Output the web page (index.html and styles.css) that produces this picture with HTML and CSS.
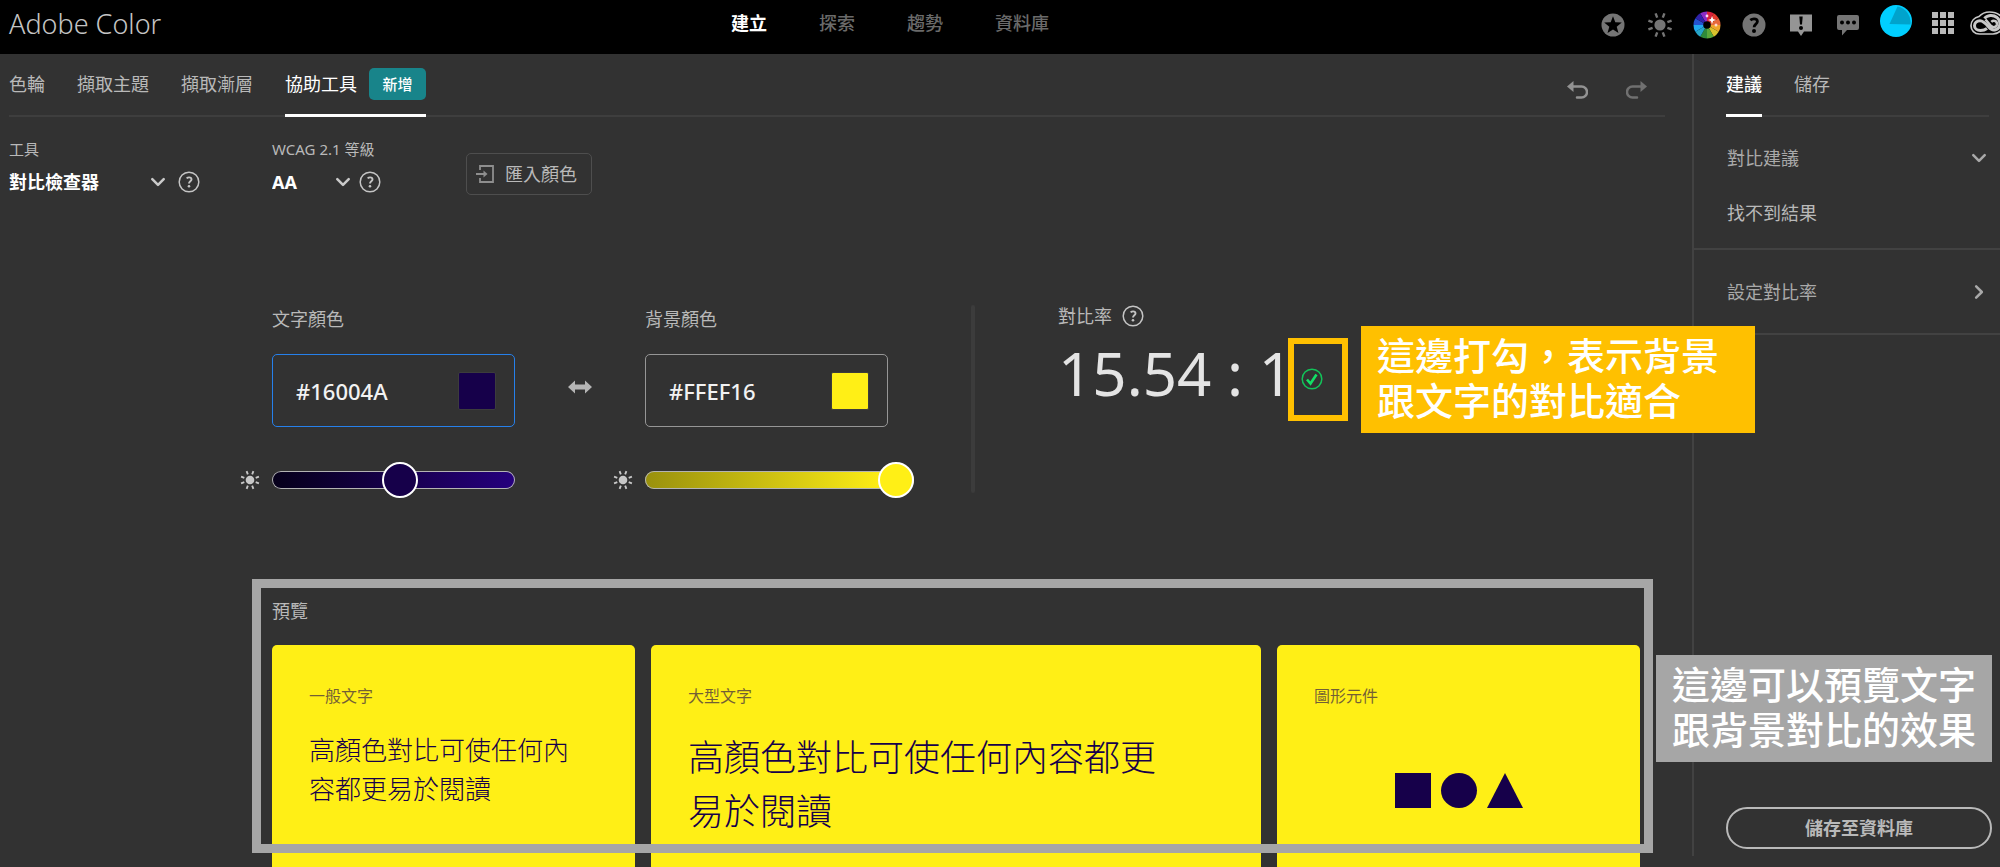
FILE: index.html
```html
<!DOCTYPE html>
<html lang="zh-Hant">
<head>
<meta charset="utf-8">
<meta name="viewport" content="width=device-width, initial-scale=1">
<title>Adobe Color</title>
<link rel="stylesheet" href="styles.css">
</head>
<body>
<svg class="defs" aria-hidden="true">
  <symbol id="sun" viewBox="0 0 26 26">
    <circle cx="13" cy="13" r="5.6" fill="currentColor"/>
    <g stroke="currentColor" stroke-width="2.4">
      <path d="M10.2 5.6 8.6 1.4M15.8 5.6l1.6-4.2M20.4 10.2l4.2-1.6M20.4 15.8l4.2 1.6M15.8 20.4l1.6 4.2M10.2 20.4l-1.6 4.2M5.6 15.8l-4.2 1.6M5.6 10.2 1.4 8.6"/>
    </g>
  </symbol>
  <symbol id="help" viewBox="0 0 22 22">
    <circle cx="11" cy="11" r="9.8" fill="none" stroke="currentColor" stroke-width="1.5"/>
    <path d="M8.6 7.4c.8-.7 1.6-1 2.5-1 1.4 0 2.4.8 2.4 2 0 1.9-2.5 2-2.5 4.2" fill="none" stroke="currentColor" stroke-width="1.9"/>
    <circle cx="11" cy="15.3" r="1.3" fill="currentColor"/>
  </symbol>
  <symbol id="chevron" viewBox="0 0 14 14">
    <path d="M2 4.500 7 9.500l5-5" fill="none" stroke="currentColor" stroke-width="2.2" stroke-linecap="round" stroke-linejoin="round"/>
  </symbol>
  <symbol id="undo" viewBox="0 0 21 18">
    <path d="M5 5.500h9.500a5 5 0 0 1 0 11H10" fill="none" stroke="currentColor" stroke-width="2.5" stroke-linecap="round"/>
    <path d="M0 5.500 6.500 0v11z" fill="currentColor"/>
  </symbol>
</svg>

<header class="topbar">
  <h1 class="brand">Adobe Color</h1>
  <nav class="mainnav">
    <a class="active" href="#create">建立</a>
    <a href="#explore">探索</a>
    <a href="#trends">趨勢</a>
    <a href="#libraries">資料庫</a>
  </nav>
  <div class="actions">
    <button class="icon" aria-label="星號"><svg width="24" height="24" viewBox="0 0 24 24"><circle cx="12" cy="12" r="11.5" fill="#757575"/><path d="m12 3.200 2.300 6.100 6.500.3-5.100 4.100 1.800 6.300-5.500-3.600L6.500 20l1.800-6.300-5.100-4.100 6.500-.3z" fill="#000"/></svg></button>
    <button class="icon" aria-label="主題"><svg width="26" height="26"><use href="#sun"/></svg></button>
    <button class="icon" aria-label="色輪"><svg width="28" height="28" viewBox="0 0 28 28">
      <g transform="translate(14 14)">
        <path fill="#8a2bc4" d="M0 0-6.800-11.700A13.500 13.500 0 0 1 0-13.500z"/>
        <path fill="#d8203c" d="M0 0V-13.500A13.500 13.500 0 0 1 6.800-11.700z"/>
        <path fill="#e23a2e" d="M0 0 6.800-11.700A13.500 13.500 0 0 1 11.700-6.800z"/>
        <path fill="#e8683a" d="M0 0 11.700-6.800A13.500 13.500 0 0 1 13.500 0z"/>
        <path fill="#efa52a" d="M0 0H13.500A13.500 13.500 0 0 1 11.700 6.800z"/>
        <path fill="#d9c22d" d="M0 0 11.700 6.800A13.500 13.500 0 0 1 6.800 11.700z"/>
        <path fill="#5aa83a" d="M0 0 6.800 11.700A13.500 13.500 0 0 1 0 13.500z"/>
        <path fill="#2f8a3a" d="M0 0V13.500A13.500 13.500 0 0 1-6.800 11.700z"/>
        <path fill="#27a6c8" d="M0 0-6.800 11.700A13.500 13.500 0 0 1-11.700 6.800z"/>
        <path fill="#20a8ee" d="M0 0-11.700 6.800A13.500 13.500 0 0 1-13.500 0z"/>
        <path fill="#2452cf" d="M0 0H-13.500A13.500 13.500 0 0 1-11.700-6.800z"/>
        <path fill="#2f22a8" d="M0 0-11.700-6.800A13.500 13.500 0 0 1-6.800-11.700z"/>
        <circle r="3.8" fill="#000"/>
        <path fill="#fff" d="m5-9 1.100 2.900L9-5 6.100-3.900 5-1 3.900-3.900 1-5l2.900-1.100z"/>
        <circle cx="0" cy="-9" r="1.4" fill="#ffd9ee"/><circle cx="9" cy="0" r="1.5" fill="#ffd9c9"/>
      </g></svg></button>
    <button class="icon" aria-label="說明"><svg width="24" height="24" viewBox="0 0 24 24"><circle cx="12" cy="12" r="11.5" fill="#757575"/><path d="M8.300 7.200C9.500 6.200 10.700 5.800 12 5.800c2.100 0 3.400 1.100 3.400 2.700 0 2.600-3.300 2.700-3.300 5.700" fill="none" stroke="#000" stroke-width="2.8"/><circle cx="12" cy="18" r="2" fill="#000"/></svg></button>
    <button class="icon" aria-label="公告"><svg width="22" height="24" viewBox="0 0 22 24"><path d="M0 1.500h22v17h-8L11 23l-3-4.500H0z" fill="#959595"/><path d="M9.300 3.500h3.400l-.7 8h-2z" fill="#000"/><circle cx="11" cy="15" r="2" fill="#000"/></svg></button>
    <button class="icon" aria-label="意見"><svg width="22" height="24" viewBox="0 0 22 24"><path d="M2 2h18a2 2 0 0 1 2 2v11a2 2 0 0 1-2 2H10l-5 5.500V17H2a2 2 0 0 1-2-2V4a2 2 0 0 1 2-2z" fill="#757575"/><g fill="#000"><circle cx="5" cy="9.500" r="2"/><circle cx="11" cy="9.500" r="2"/><circle cx="17" cy="9.500" r="2"/></g></svg></button>
    <button class="icon avatar" aria-label="個人檔案"><svg width="32" height="32" viewBox="0 0 32 32"><circle cx="16" cy="16" r="16" fill="#00cfff"/><path d="M17.500 1.500A16 16 0 0 1 30.500 19.500L9.500 19z" fill="#00a3cc"/></svg></button>
    <button class="icon apps" aria-label="應用程式"><svg width="22" height="22" viewBox="0 0 22 22" fill="#b9b9b9"><path d="M0 0h6v6H0zM8 0h6v6H8zM16 0h6v6h-6zM0 8h6v6H0zM8 8h6v6H8zM16 8h6v6h-6zM0 16h6v6H0zM8 16h6v6H8zM16 16h6v6h-6z"/></svg></button>
    <button class="icon cloud" aria-label="Creative Cloud"><svg width="36" height="24" viewBox="0 0 36 24"><g fill="none" stroke="#c8c8c8"><path stroke-width="1.7" d="M9 5.500C12 2.200 15 1 19.500 1 28 1 34 6 34 12s-5 11-11 11H9.500C4.500 23 1 19.300 1 14.800 1 10 4.500 6.500 9 5.500z"/><path stroke-width="3" d="M17 17.500c-2 1.500-4 2-6.500 2-3.500 0-6-2-6-4.800 0-3 2.500-5 5.500-5s5 1.800 8.500 6.100c2 2.400 4.500 3.700 7 3 5-1.300 6-8.300 1.500-12.300-4-3.300-10-2.500-12.500 1"/><path stroke-width="2.6" d="m15.500 8.500 5.500 6.500c2 2 5.500 1.500 6-1.500.4-3-3-5-5.700-2.600"/></g></svg></button>
  </div>
</header>

<div class="app">
  <main class="workspace">
    <div class="tabbar">
      <nav class="tabs">
        <a href="#wheel">色輪</a>
        <a href="#extract-theme">擷取主題</a>
        <a href="#extract-gradient">擷取漸層</a>
        <a class="active" href="#accessibility">協助工具<span class="badge">新增</span></a>
      </nav>
      <div class="history">
        <button class="icon" aria-label="復原"><svg width="21" height="18"><use href="#undo"/></svg></button>
        <button class="icon redo" aria-label="重做"><svg width="21" height="18"><use href="#undo"/></svg></button>
      </div>
    </div>

    <div class="tools">
      <div class="tool tool-type">
        <label for="tool">工具</label>
        <div class="control">
          <div class="picker">
            <select id="tool"><option>對比檢查器</option></select>
            <svg class="chev" width="16" height="16"><use href="#chevron"/></svg>
          </div>
          <button class="icon" aria-label="工具說明"><svg width="22" height="22"><use href="#help"/></svg></button>
        </div>
      </div>
      <div class="tool tool-level">
        <label for="level">WCAG 2.1 等級</label>
        <div class="control">
          <div class="picker">
            <select id="level"><option>AA</option></select>
            <svg class="chev" width="16" height="16"><use href="#chevron"/></svg>
          </div>
          <button class="icon" aria-label="等級說明"><svg width="22" height="22"><use href="#help"/></svg></button>
        </div>
      </div>
      <button class="import">
        <svg width="18" height="18" viewBox="0 0 18 18" fill="none" stroke="#8e8e8e" stroke-width="1.8"><path d="M4 5V1h13v16H4v-4M0 9h9"/><path d="m7.500 5.500 4 3.500-4 3.500z" fill="#8e8e8e" stroke="none"/></svg>
        匯入顏色
      </button>
    </div>

    <section class="checker">
      <div class="color">
        <label class="color-label" for="fg">文字顏色</label>
        <div class="field focused">
          <input id="fg" type="text" value="#16004A">
          <button class="swatch swatch-fg" aria-label="選取文字顏色"></button>
        </div>
        <svg class="sun" width="20" height="20"><use href="#sun"/></svg>
        <input class="slider slider-fg" type="range" min="0" max="100" value="53" aria-label="文字顏色亮度">
      </div>
      <button class="icon swap" aria-label="交換顏色"><svg width="24" height="14" viewBox="0 0 24 14"><path d="M0 7l7-6.500V4.500h10V.5L24 7l-7 6.500V9.500H7v4z" fill="#b5b5b5"/></svg></button>
      <div class="color">
        <label class="color-label" for="bg">背景顏色</label>
        <div class="field">
          <input id="bg" type="text" value="#FFEF16">
          <button class="swatch swatch-bg" aria-label="選取背景顏色"></button>
        </div>
        <svg class="sun" width="20" height="20"><use href="#sun"/></svg>
        <input class="slider slider-bg" type="range" min="0" max="100" value="100" aria-label="背景顏色亮度">
      </div>
      <div class="divider"></div>
      <div class="ratio">
        <div class="ratio-label">對比率
          <button class="icon" aria-label="對比率說明"><svg width="22" height="22"><use href="#help"/></svg></button>
        </div>
        <div class="ratio-value">
          <output>15.54 : 1</output>
          <div class="result">
            <svg width="22" height="22" viewBox="0 0 22 22" fill="none" stroke="#12c259"><circle cx="11" cy="11" r="9.8" stroke-width="1.5"/><path d="m6 11.500 3.500 4L15.500 6.500" stroke="#12e066" stroke-width="2.6"/></svg>
            <div class="result-frame"></div>
            <p class="note note-result">這邊打勾，表示背景<br>跟文字的對比適合</p>
          </div>
        </div>
      </div>
    </section>

    <section class="preview">
      <h2 class="preview-title">預覽</h2>
      <div class="cards">
        <article class="card">
          <h3>一般文字</h3>
          <p class="sample-normal">高顏色對比可使任何內容都更易於閱讀</p>
        </article>
        <article class="card">
          <h3>大型文字</h3>
          <p class="sample-large">高顏色對比可使任何內容都更易於閱讀</p>
        </article>
        <article class="card">
          <h3>圖形元件</h3>
          <svg class="shapes" width="128" height="35" viewBox="0 0 128 35" fill="#16004a"><path d="M0 0h36v35H0z"/><ellipse cx="64" cy="17.5" rx="18" ry="17.5"/><path d="m110 0 18 35H92z"/></svg>
        </article>
      </div>
      <div class="preview-frame"></div>
      <p class="note note-preview">這邊可以預覽文字<br>跟背景對比的效果</p>
    </section>
  </main>

  <aside class="sidebar">
    <nav class="tabs side-tabs">
      <a class="active strong" href="#suggest">建議</a>
      <a href="#save">儲存</a>
    </nav>
    <section class="panel">
      <button class="panel-head">對比建議<svg width="16" height="16"><use href="#chevron"/></svg></button>
      <p class="empty">找不到結果</p>
    </section>
    <section class="panel panel-closed">
      <button class="panel-head">設定對比率<svg class="right" width="16" height="16"><use href="#chevron"/></svg></button>
    </section>
    <button class="save">儲存至資料庫</button>
  </aside>
</div>
</body>
</html>
```

FILE: styles.css
```css
* {
  box-sizing: border-box;
}

body {
  margin: 0;
  height: 100vh;
  display: flex;
  flex-direction: column;
  overflow: hidden;
  background: #323232;
  color: #b9b9b9;
  font-family: "Noto Sans", "Noto Sans CJK TC", sans-serif;
  font-size: 18px;
  line-height: 24px;
}

h1, h2, h3, p {
  margin: 0;
  font-weight: 400;
}

a {
  color: inherit;
  text-decoration: none;
}

button, input, select {
  margin: 0;
  padding: 0;
  border: 0;
  background: none;
  color: inherit;
  font: inherit;
}

svg {
  display: block;
  flex: none;
}

.defs {
  position: absolute;
  width: 0;
  height: 0;
}

.icon {
  display: flex;
  justify-content: center;
  flex: none;
}

/* Top bar */

.topbar {
  display: grid;
  grid-template-columns: 722px 1fr auto;
  flex: none;
  height: 54px;
  padding-left: 9px;
  background: #000;
  overflow: hidden;
}

.brand {
  color: #c4c4c4;
  font-size: 27px;
  font-weight: 300;
  line-height: 48px;
}

.mainnav {
  display: flex;
  gap: 52px;
  color: #6a6a6a;
  font-weight: 500;
  line-height: 46px;
}

.mainnav .active {
  color: #fff;
  font-weight: 700;
}

.actions {
  display: flex;
  align-items: center;
  gap: 17px;
  height: 50px;
  margin-right: -6px;
  color: #757575;
}

.actions .icon {
  min-width: 30px;
}

.actions .avatar {
  margin: 0 -1px 8px 0;
}

.actions .apps {
  margin-bottom: 4px;
}

.actions .cloud {
  margin: 0 0 4px -5px;
}

/* Layout */

.app {
  display: flex;
  flex: 1;
  min-height: 0;
}

.workspace {
  display: flex;
  flex-direction: column;
  flex: 1;
  min-width: 0;
}

.sidebar {
  display: flex;
  flex-direction: column;
  flex: none;
  width: 308px;
  margin-bottom: 11px;
  border-left: 2px solid #424242;
}

/* Tabs */

.tabbar {
  display: flex;
  justify-content: space-between;
  flex: none;
  height: 63px;
  margin: 0 27px 0 9px;
  box-shadow: inset 0 -2px #3e3e3e;
}

.tabs {
  display: flex;
  gap: 32px;
}

.tabs a {
  display: flex;
  align-items: center;
  gap: 12px;
  padding-bottom: 3px;
}

.tabs .active {
  color: #fff;
  box-shadow: inset 0 -3px #fff;
}

.tabs .strong {
  font-weight: 500;
}

.badge {
  width: 57px;
  border-radius: 5px;
  background: #18848a;
  font-size: 15px;
  font-weight: 500;
  line-height: 32px;
  text-align: center;
}

.history {
  display: flex;
  align-items: center;
  gap: 38px;
  padding: 8px 18px 0 0;
  color: #929292;
}

.redo {
  color: #707070;
  transform: scaleX(-1);
}

/* Tool options */

.tools {
  display: flex;
  align-items: flex-end;
  flex: none;
  padding: 20px 9px 0;
}

.tool {
  display: grid;
  gap: 8px;
  font-size: 15px;
}

.tool-type {
  width: 263px;
}

.tool-level {
  width: 194px;
}

.control {
  display: flex;
  align-items: center;
  gap: 12px;
  height: 26px;
}

.picker {
  display: grid;
  align-items: center;
  width: 157px;
  color: #fff;
  font-size: 18px;
  font-weight: 700;
}

.tool-level .picker {
  width: 79px;
}

.tool-level .control {
  gap: 8px;
}

.picker select {
  grid-area: 1 / 1;
  appearance: none;
}

.chev {
  grid-area: 1 / 1;
  justify-self: end;
  color: #cacaca;
  pointer-events: none;
}

.control .icon,
.ratio .icon {
  color: #c4c4c4;
}

.import {
  display: flex;
  align-items: center;
  gap: 11px;
  height: 42px;
  padding: 0 14px 0 9px;
  border: 1px solid #4e4e4e;
  border-radius: 5px;
}

/* Contrast checker */

.checker {
  display: flex;
  align-items: flex-start;
  flex: none;
  margin-top: 110px;
  padding-left: 240px;
}

.color {
  display: grid;
  flex: none;
  grid-template-columns: 20px 243px;
  grid-template-rows: 49px 108px 36px;
  column-gap: 12px;
  align-items: center;
}

.color-label {
  grid-column: 2;
  align-self: start;
  line-height: 28px;
}

.field {
  grid-column: 2;
  align-self: start;
  display: flex;
  align-items: center;
  justify-content: space-between;
  height: 73px;
  padding: 0 18px 0 23px;
  border: 1px solid #969696;
  border-radius: 5px;
}

.field.focused {
  border-color: #2680eb;
}

.field input {
  flex: 1;
  min-width: 0;
  outline: 0;
  color: #f2f2f2;
  font-size: 22px;
  font-weight: 500;
}

.swatch {
  flex: none;
  width: 38px;
  height: 38px;
  border: 1px solid #3c3c3c;
  border-radius: 2px;
}

.swatch-fg {
  background: #16004a;
}

.swatch-bg {
  background: #ffef16;
}

.sun {
  color: #c8c8c8;
}

.slider {
  width: 243px;
  height: 36px;
  appearance: none;
}

.slider::-webkit-slider-runnable-track {
  height: 18px;
  border-radius: 9px;
  box-shadow: inset 0 0 0 1px #b4b4b4;
}

.slider::-webkit-slider-thumb {
  appearance: none;
  width: 36px;
  height: 36px;
  margin-top: -9px;
  border: 2px solid #fff;
  border-radius: 50%;
  background: #16004a;
}

.slider-fg::-webkit-slider-runnable-track {
  background: linear-gradient(90deg, #06001a, #16004a 50%, #26007e);
}

.slider-bg {
  width: 269px;
}

.slider-bg::-webkit-slider-runnable-track {
  background: linear-gradient(90deg, #99900d, #ffef16 90%);
}

.slider-bg::-webkit-slider-thumb {
  background: #ffef16;
}

.swap {
  margin: 75px 21px 0 53px;
}

.divider {
  flex: none;
  width: 4px;
  height: 188px;
  margin: 0 83px;
  border-radius: 2px;
  background: #3c3c3c;
}

.ratio-label {
  display: flex;
  align-items: center;
  gap: 10px;
  line-height: 22px;
}

.ratio-value {
  display: flex;
  align-items: center;
  gap: 8px;
  margin-top: 6px;
  color: #e4e4e4;
  font-size: 60px;
  line-height: 80px;
  white-space: nowrap;
}

.result {
  position: relative;
  margin-top: 12px;
}

/* Annotations drawn over the page */

.result-frame {
  position: absolute;
  inset: -30px -25px -31px -13px;
  border: 6px solid #ffc000;
}

.note {
  position: absolute;
  z-index: 1;
  padding: 7px 16px 10px;
  color: #fff;
  font-size: 38px;
  font-weight: 500;
  line-height: 45px;
  white-space: nowrap;
}

.note-result {
  top: -42px;
  left: 60px;
  padding-right: 36px;
  background: #ffc000;
}

.note-preview {
  top: 58px;
  left: calc(100% + 16px);
  background: #a6a6a6;
}

.preview-frame {
  position: absolute;
  top: -18px;
  left: -20px;
  right: -13px;
  height: 274px;
  border: 9px solid #a6a6a6;
}

/* Preview */

.preview {
  position: relative;
  display: flex;
  flex-direction: column;
  flex: 1;
  margin: 99px 52px 0 272px;
}

.preview-title {
  font-size: 18px;
  line-height: 28px;
}

.cards {
  display: grid;
  grid-template-columns: 363fr 610fr 363fr;
  gap: 16px;
  flex: 1;
  margin-top: 20px;
}

.card {
  padding: 39px 37px 0;
  border-radius: 5px 5px 0 0;
  background: #ffef16;
  color: #16004a;
}

.card h3 {
  margin-bottom: 23px;
  font-size: 16px;
  opacity: 0.6;
}

.sample-normal {
  max-width: 10em;
  font-size: 26px;
  font-weight: 300;
  line-height: 39px;
}

.sample-large {
  max-width: 13em;
  font-size: 36px;
  font-weight: 300;
  line-height: 54px;
}

.shapes {
  margin: 65px auto 0;
}

/* Sidebar */

.side-tabs {
  height: 63px;
  margin: 0 11px 0 32px;
  box-shadow: inset 0 -2px #3e3e3e;
}

.panel {
  padding: 29px 13px 23px 33px;
  border-bottom: 2px solid #424242;
}

.panel-closed {
  padding-top: 30px;
  padding-bottom: 29px;
}

.panel-head {
  display: flex;
  align-items: center;
  justify-content: space-between;
  width: 100%;
  color: #a9a9a9;
}

.right {
  transform: rotate(-90deg);
}

.empty {
  margin-top: 31px;
}

.save {
  height: 42px;
  margin: auto 8px 7px 32px;
  border: 2px solid #b9b9b9;
  border-radius: 21px;
  font-weight: 700;
}
```
